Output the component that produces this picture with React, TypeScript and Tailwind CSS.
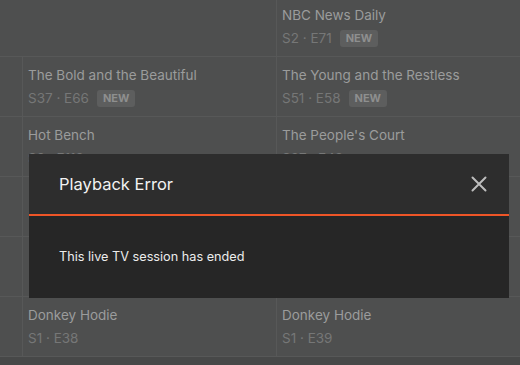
import React from 'react';

type Show = { title: string; ep?: string; isNew?: boolean };

const rows: { left: Show | null; right: Show | null; full?: boolean }[] = [
  { left: null, right: { title: 'NBC News Daily', ep: 'S2 · E71', isNew: true }, full: true },
  {
    left: { title: 'The Bold and the Beautiful', ep: 'S37 · E66', isNew: true },
    right: { title: 'The Young and the Restless', ep: 'S51 · E58', isNew: true },
  },
  {
    left: { title: 'Hot Bench', ep: 'S9 · E112' },
    right: { title: "The People's Court", ep: 'S27 · E43' },
  },
  { left: null, right: null },
  { left: null, right: null },
  {
    left: { title: 'Donkey Hodie', ep: 'S1 · E38' },
    right: { title: 'Donkey Hodie', ep: 'S1 · E39' },
  },
];

function Cell({ show }: { show: Show | null }) {
  return (
    <div className="w-[254px] shrink-0 border-l border-[#575858] pl-[5px] pt-[8px]">
      {show && (
        <>
          <div className="text-[13.5px] leading-[20px] text-[#9b9c9c]">{show.title}</div>
          <div className="mt-[4px] flex items-center gap-[8px] text-[13.5px] leading-[18px] text-[#767777]">
            <span>{show.ep}</span>
            {show.isNew && (
              <span className="rounded-[3px] bg-[#5d5e5e] px-[6px] text-[11px] font-bold leading-[17px] text-[#8e8f8f]">
                NEW
              </span>
            )}
          </div>
        </>
      )}
    </div>
  );
}

export default function App() {
  return (
    <div
      className="relative h-[365px] w-[520px] overflow-hidden bg-[#474848]"
      style={{ fontFamily: 'Inter, "Noto Sans", sans-serif' }}
    >
      {/* Guide grid, dimmed */}
      <div className="-mt-[3px] flex flex-col">
        {rows.map((row, i) => (
          <div key={i} className="flex h-[60px] border-b border-[#575858] bg-[#4e4f4f]">
            {row.full ? (
              <div className="w-[276px] shrink-0" />
            ) : (
              <>
                <div className="w-[22px] shrink-0" />
                <Cell show={row.left} />
              </>
            )}
            <Cell show={row.right} />
          </div>
        ))}
      </div>

      {/* Modal */}
      <div className="absolute left-[29px] top-[154px] w-[480px]">
        <div className="flex h-[60px] items-center justify-between bg-[#2d2d2d] pl-[30px] pr-[22px]">
          <span className="text-[16.5px] text-[#f2f2f2]">Playback Error</span>
          <button className="flex h-[16px] w-[16px] items-center justify-center">
            <svg width="16" height="16" viewBox="0 0 16 16">
              <path d="M1.5 1.5 L14.5 14.5 M14.5 1.5 L1.5 14.5" stroke="#bdbdbd" strokeWidth="2" strokeLinecap="round" />
            </svg>
          </button>
        </div>
        <div className="h-[2px] bg-[#ee5527]" />
        <div className="flex h-[82px] items-center bg-[#262626] px-[30px]">
          <span className="text-[12.7px] text-[#ececec]">This live TV session has ended</span>
        </div>
      </div>
    </div>
  );
}
